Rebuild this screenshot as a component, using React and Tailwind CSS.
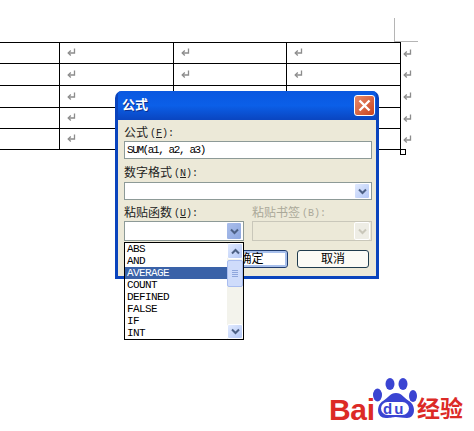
import React from 'react';

const ui = 'font-["Liberation_Mono","Noto_Sans_CJK_SC",monospace]';
const functions = ['ABS', 'AND', 'AVERAGE', 'COUNT', 'DEFINED', 'FALSE', 'IF', 'INT'];
const rowHeights = [21, 22, 22, 21, 21];
const colWidths = ['w-[60px]', 'w-[114px]', 'w-[113px]', 'w-[114px]'];

const ReturnMark = () => (
  <svg width="9" height="9" viewBox="0 0 9 9" fill="none" stroke="#8c8c8c" strokeWidth="1.3">
    <path d="M7.5 0.5V5H1.5" />
    <path d="M3.8 2.5L1.2 5L3.8 7.5" />
  </svg>
);

const Chevron = ({ color = '#4d6185', up = false }) => (
  <svg width="9" height="7" viewBox="0 0 9 7" fill="none" stroke={color} strokeWidth="2">
    <path d={up ? 'M1 5.5L4.5 2L8 5.5' : 'M1 1.5L4.5 5L8 1.5'} />
  </svg>
);

const ArrowButton = ({ className = '', up = false, disabled = false, pressed = false }) => (
  <div
    className={`flex items-center justify-center rounded-[2px] border border-white ${
      disabled
        ? 'bg-[#eeede5]'
        : pressed
          ? 'bg-gradient-to-br from-[#a9bdea] to-[#8ea8e0]'
          : 'bg-gradient-to-br from-[#e1eafe] to-[#b4c8f6]'
    } ${className}`}
  >
    <Chevron up={up} color={disabled ? '#c9c7ba' : '#4d6185'} />
  </div>
);

const Label = ({ text, hotkey, disabled = false, className = '' }) => (
  <div className={`flex h-[14px] items-center pt-[2px] text-[12px] leading-[12px] ${disabled ? 'text-[#aaa899]' : 'text-[#222]'} ${className}`}>
    {text}
    <span className="ml-[2px] text-[10px]">
      (<span className={disabled ? '' : 'underline'}>{hotkey}</span>):
    </span>
  </div>
);

const DocTable = () => (
  <div className="mt-[42px] w-[420px]">
    <div className="h-px w-[401px] bg-black" />
    {rowHeights.map((height, row) => (
      <div key={row} className="flex" style={{ height }}>
        {colWidths.map((width, col) => (
          <div
            key={col}
            className={`flex items-center border-b border-r border-black pb-[1px] pl-[7px] ${width}`}
          >
            {col > 0 && <ReturnMark />}
          </div>
        ))}
        <div className="flex items-center pb-[1px] pl-[2px]">
          <ReturnMark />
        </div>
      </div>
    ))}
  </div>
);

const Dropdown = () => (
  <div className={`absolute left-[124px] top-[242px] flex h-[98px] w-[120px] border border-black bg-white text-[11px] leading-[12px] tracking-[-0.6px] ${ui}`}>
    <div className="w-[102px]">
      {functions.map((name) => (
        <div
          key={name}
          className={`h-[12px] pl-[2px] ${name === 'AVERAGE' ? 'bg-[#3a62a8] text-white' : 'text-black'}`}
        >
          {name}
        </div>
      ))}
    </div>
    <div className="flex w-[16px] flex-col justify-between bg-[#f3f3ec]">
      <div>
        <ArrowButton up className="h-[16px] w-[16px]" />
        <div className="mt-[1px] flex h-[27px] w-[16px] flex-col items-center justify-center gap-[1px] rounded-[2px] border border-[#a9bdf0] bg-[#cfdcfb]">
          <div className="h-px w-[6px] bg-[#8fa6dc]" />
          <div className="h-px w-[6px] bg-[#8fa6dc]" />
          <div className="h-px w-[6px] bg-[#8fa6dc]" />
          <div className="h-px w-[6px] bg-[#8fa6dc]" />
        </div>
      </div>
      <ArrowButton className="h-[15px] w-[16px]" />
    </div>
  </div>
);

const FormulaDialog = () => (
  <div className={`absolute left-[115px] top-[91px] flex h-[188px] w-[264px] flex-col overflow-hidden rounded-t-[7px] bg-[#0a44bd] px-[3px] pb-[3px] ${ui}`}>
    <div className="flex h-[29px] shrink-0 items-center justify-between bg-gradient-to-b from-[#0a58e0] via-[#0b5fe8] to-[#0a45c0] pl-[4px] pr-[1px]">
      <span className="text-[13px] font-bold text-white [text-shadow:1px_1px_0_#0a2f90]">公式</span>
      <div className="flex h-[21px] w-[21px] items-center justify-center rounded-[3px] border border-white bg-gradient-to-br from-[#e88a68] to-[#c9421c]">
        <svg width="13" height="13" viewBox="0 0 13 13" stroke="#fff" strokeWidth="2.4">
          <path d="M1.5 1.5L11.5 11.5M11.5 1.5L1.5 11.5" />
        </svg>
      </div>
    </div>

    <div className="flex flex-1 flex-col bg-[#ece9d8] pl-[6px] pr-[4px] pt-[6px]">
      <Label text="公式" hotkey="F" />
      <div className="mt-[1px] flex h-[18px] items-center border border-[#8d9a97] bg-white pl-[2px] text-[11px] tracking-[-1.4px] text-black">
        SUM(a1, a2, a3)
      </div>

      <Label text="数字格式" hotkey="N" className="mt-[7px]" />
      <div className="mt-[2px] flex h-[18px] items-center justify-end border border-[#8d9a97] bg-white pr-px">
        <ArrowButton className="h-[16px] w-[16px]" />
      </div>

      <div className="mt-[6px] grid grid-cols-2 gap-x-[8px]">
        <div>
          <Label text="粘贴函数" hotkey="U" />
          <div className="mt-[1px] flex h-[20px] items-center justify-end border border-[#8d9a97] bg-white pr-px">
            <ArrowButton pressed className="h-[18px] w-[16px]" />
          </div>
        </div>
        <div>
          <Label text="粘贴书签" hotkey="B" disabled />
          <div className="mt-[1px] flex h-[20px] items-center justify-end border border-[#c9c7ba] bg-[#ece9d8] pr-px">
            <ArrowButton disabled className="h-[18px] w-[16px]" />
          </div>
        </div>
      </div>

      <div className="mt-[9px] flex justify-end gap-[9px] pr-[3px]">
        <button className="h-[18px] w-[73px] rounded-[3px] border border-[#1f3c6e] bg-white pt-[1px] text-[12px] leading-none text-black shadow-[inset_0_0_0_2px_#a8c0ec]">
          确定
        </button>
        <button className="h-[18px] w-[72px] rounded-[3px] border border-[#1f3c4e] bg-[#fbfbf6] pt-[1px] text-[12px] leading-none text-black">
          取消
        </button>
      </div>
    </div>
  </div>
);

const BaiduLogo = () => (
  <div className="absolute left-[329px] top-[376px] h-[50px] w-[136px]">
    <span className='absolute left-0 top-[17px] font-["Liberation_Sans",sans-serif] text-[30px] font-bold leading-[34px] tracking-[-0.3px] text-[#dc2a26]'>
      Bai
    </span>
    <svg className="absolute left-[44px] top-0" width="44" height="44" viewBox="0 0 44 44" fill="#3a44d2">
      <ellipse cx="4.5" cy="19" rx="4.5" ry="6.5" />
      <ellipse cx="17" cy="8" rx="4.5" ry="6" />
      <ellipse cx="30" cy="8" rx="4.5" ry="6" />
      <ellipse cx="40" cy="20" rx="4" ry="6" />
      <path d="M23 17C17 17 15 22 10 25C3 29 3 42 13 42C18 42 20 41 23 41C26 41 29 42 34 42C43 42 43 29 36 25C31 22 29 17 23 17Z" />
      <rect x="8" y="26" width="28" height="13" rx="6.5" fill="#fff" />
    </svg>
    <span className='absolute left-[54px] top-[25px] font-["Liberation_Sans",sans-serif] text-[15px] font-bold leading-[16px] tracking-[2px] text-[#3a44d2]'>
      du
    </span>
    <span className='absolute left-[88px] top-[17px] font-["Noto_Sans_CJK_SC",sans-serif] text-[23px] font-bold leading-[28px] text-[#dc2a26]'>
      经验
    </span>
  </div>
);

const App = () => (
  <div className="relative h-[431px] w-[474px] overflow-hidden bg-white">
    {/* page margin corner mark */}
    <div className="absolute left-[394px] top-[18px] h-[24px] w-[24px] border-b border-l border-[#b5b5b5]" />
    <div className="flow-root">
      <DocTable />
    </div>
    <div className="absolute left-[400px] top-[149px] h-[6px] w-[6px] border border-black bg-white" />
    <FormulaDialog />
    <Dropdown />
    <BaiduLogo />
  </div>
);

export default App;
